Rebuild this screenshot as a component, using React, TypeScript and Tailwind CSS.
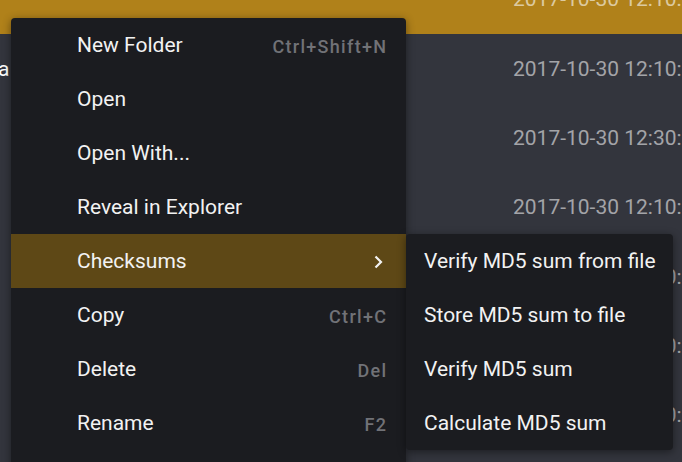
import React from "react";

const dates = [
  "2017-10-30 12:10:00",
  "2017-10-30 12:10:00",
  "2017-10-30 12:30:00",
  "2017-10-30 12:10:00",
  "2017-10-30 12:10:00",
  "2017-10-30 12:10:00",
  "2017-10-30 12:10:00",
  "2017-10-30 12:10:00",
];

const items: { label: string; shortcut?: string; sub?: boolean }[] = [
  { label: "New Folder", shortcut: "Ctrl+Shift+N" },
  { label: "Open" },
  { label: "Open With..." },
  { label: "Reveal in Explorer" },
  { label: "Checksums", sub: true },
  { label: "Copy", shortcut: "Ctrl+C" },
  { label: "Delete", shortcut: "Del" },
  { label: "Rename", shortcut: "F2" },
];

const subItems = [
  "Verify MD5 sum from file",
  "Store MD5 sum to file",
  "Verify MD5 sum",
  "Calculate MD5 sum",
];

export default function App() {
  return (
    <div
      className="relative w-[682px] h-[462px] overflow-hidden bg-[#33353d]"
      style={{ fontFamily: "Roboto, 'Liberation Sans', sans-serif" }}
    >
      <div className="flex flex-col mt-[-35px]">
        {dates.map((d, i) => (
          <div
            key={i}
            className={`flex items-center h-[69.3px] shrink-0 text-[21px] pt-[1px] ${
              i === 0 ? "bg-[#b0811a] text-[#dccaa0]" : "text-[#a3a4a8]"
            }`}
          >
            <div className="w-[513px] shrink-0 text-white whitespace-nowrap overflow-hidden">
              {i === 1 ? (
                <span className="block ml-[-2px] w-[20px]">a</span>
              ) : null}
            </div>
            <span className="whitespace-nowrap">{d}</span>
          </div>
        ))}
      </div>

      <div className="absolute left-[11px] top-[18px] w-[395px] h-[460px] bg-[#1b1c20] rounded-[4px] shadow-[0_2px_8px_rgba(0,0,0,0.45)]">
        {items.map((it) => (
          <div
            key={it.label}
            className={`relative flex items-center justify-between h-[54px] pl-[66px] pr-[20px] pt-[2px] ${
              it.sub ? "bg-[#5e4816]" : ""
            }`}
          >
            <span className="text-[21px] text-[#f2f2f2]">{it.label}</span>
            {it.shortcut ? (
              <span className="text-[18px] font-medium tracking-[1.3px] text-[#717277] mr-[-1.3px]">
                {it.shortcut}
              </span>
            ) : null}
            {it.sub ? (
              <>
                <svg
                  width="12"
                  height="16"
                  viewBox="0 0 12 16"
                  className="mr-[2px]"
                >
                  <path
                    d="M3.5 2.5 L9 8 L3.5 13.5"
                    fill="none"
                    stroke="#f2f2f2"
                    strokeWidth="2.2"
                  />
                </svg>
                <div className="absolute left-[395px] top-0 w-[267px] bg-[#1b1c20] rounded-[4px] shadow-[0_2px_8px_rgba(0,0,0,0.45)] z-10">
                  {subItems.map((s) => (
                    <div
                      key={s}
                      className="flex items-center h-[54px] pl-[18px] pt-[2px] text-[21px] text-[#f2f2f2] whitespace-nowrap"
                    >
                      {s}
                    </div>
                  ))}
                </div>
              </>
            ) : null}
          </div>
        ))}
      </div>
    </div>
  );
}
